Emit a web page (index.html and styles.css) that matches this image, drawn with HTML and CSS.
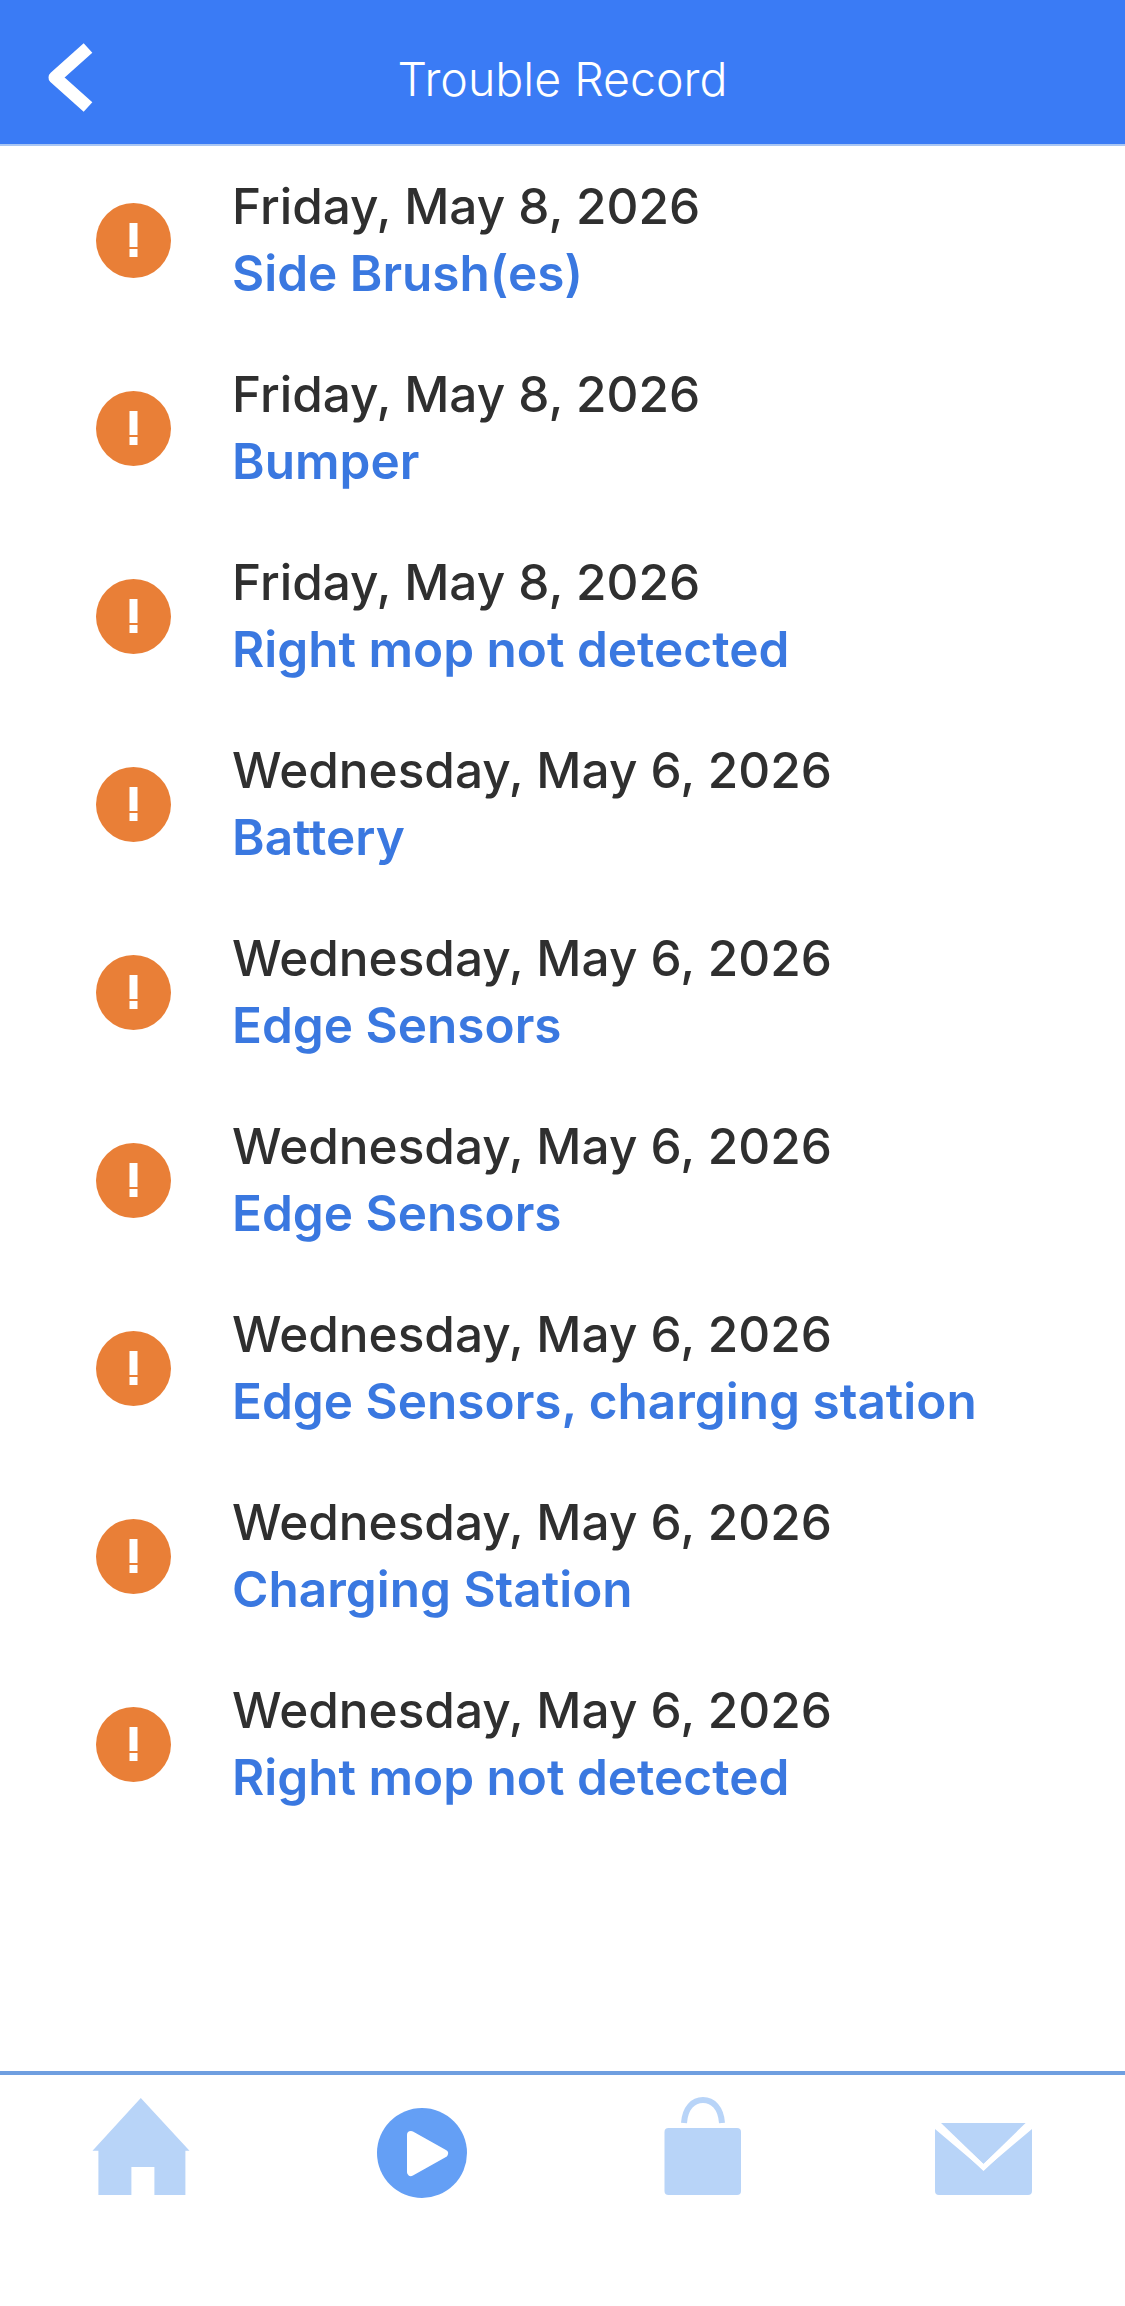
FILE: index.html
```html
<!DOCTYPE html>
<html>
<head>
  <title>Trouble Record</title>
  <link rel="stylesheet" href="styles.css">
</head>
<body>
  <div class="header">
    <svg class="back" width="70" height="90" viewBox="0 0 70 90">
      <path d="M51 15 L18 44.5 L51 74" fill="none" stroke="#fff" stroke-width="13" stroke-linejoin="round"/>
    </svg>
    <div class="title">Trouble Record</div>
  </div>

  <div class="list">
    <div class="row">
      <svg class="warn" width="75" height="75" viewBox="0 0 75 75"><circle cx="37.5" cy="37.5" r="37.5"/><rect class="mark" x="33.5" y="20" width="8" height="24"/><rect class="mark" x="33.5" y="46" width="8" height="8"/></svg>
      <div><div class="date">Friday, May 8, 2026</div><div class="name">Side Brush(es)</div></div>
    </div>
    <div class="row">
      <svg class="warn" width="75" height="75" viewBox="0 0 75 75"><circle cx="37.5" cy="37.5" r="37.5"/><rect class="mark" x="33.5" y="20" width="8" height="24"/><rect class="mark" x="33.5" y="46" width="8" height="8"/></svg>
      <div><div class="date">Friday, May 8, 2026</div><div class="name">Bumper</div></div>
    </div>
    <div class="row">
      <svg class="warn" width="75" height="75" viewBox="0 0 75 75"><circle cx="37.5" cy="37.5" r="37.5"/><rect class="mark" x="33.5" y="20" width="8" height="24"/><rect class="mark" x="33.5" y="46" width="8" height="8"/></svg>
      <div><div class="date">Friday, May 8, 2026</div><div class="name">Right mop not detected</div></div>
    </div>
    <div class="row">
      <svg class="warn" width="75" height="75" viewBox="0 0 75 75"><circle cx="37.5" cy="37.5" r="37.5"/><rect class="mark" x="33.5" y="20" width="8" height="24"/><rect class="mark" x="33.5" y="46" width="8" height="8"/></svg>
      <div><div class="date">Wednesday, May 6, 2026</div><div class="name">Battery</div></div>
    </div>
    <div class="row">
      <svg class="warn" width="75" height="75" viewBox="0 0 75 75"><circle cx="37.5" cy="37.5" r="37.5"/><rect class="mark" x="33.5" y="20" width="8" height="24"/><rect class="mark" x="33.5" y="46" width="8" height="8"/></svg>
      <div><div class="date">Wednesday, May 6, 2026</div><div class="name">Edge Sensors</div></div>
    </div>
    <div class="row">
      <svg class="warn" width="75" height="75" viewBox="0 0 75 75"><circle cx="37.5" cy="37.5" r="37.5"/><rect class="mark" x="33.5" y="20" width="8" height="24"/><rect class="mark" x="33.5" y="46" width="8" height="8"/></svg>
      <div><div class="date">Wednesday, May 6, 2026</div><div class="name">Edge Sensors</div></div>
    </div>
    <div class="row">
      <svg class="warn" width="75" height="75" viewBox="0 0 75 75"><circle cx="37.5" cy="37.5" r="37.5"/><rect class="mark" x="33.5" y="20" width="8" height="24"/><rect class="mark" x="33.5" y="46" width="8" height="8"/></svg>
      <div><div class="date">Wednesday, May 6, 2026</div><div class="name">Edge Sensors, charging station</div></div>
    </div>
    <div class="row">
      <svg class="warn" width="75" height="75" viewBox="0 0 75 75"><circle cx="37.5" cy="37.5" r="37.5"/><rect class="mark" x="33.5" y="20" width="8" height="24"/><rect class="mark" x="33.5" y="46" width="8" height="8"/></svg>
      <div><div class="date">Wednesday, May 6, 2026</div><div class="name">Charging Station</div></div>
    </div>
    <div class="row">
      <svg class="warn" width="75" height="75" viewBox="0 0 75 75"><circle cx="37.5" cy="37.5" r="37.5"/><rect class="mark" x="33.5" y="20" width="8" height="24"/><rect class="mark" x="33.5" y="46" width="8" height="8"/></svg>
      <div><div class="date">Wednesday, May 6, 2026</div><div class="name">Right mop not detected</div></div>
    </div>
  </div>

  <div class="tabs">
    <svg width="110" height="110" viewBox="0 0 110 110">
      <path fill="#b8d4f8" d="M54.8 6 L103.5 58.7 L99.4 58.7 L99.4 103 L68.4 103 L68.4 75 L45.4 75 L45.4 103 L12.4 103 L12.4 58.7 L6.5 58.7 Z"/>
    </svg>
    <svg width="110" height="110" viewBox="0 0 110 110">
      <circle cx="55" cy="61" r="45" fill="#649ff5"/>
      <path fill="#fff" stroke="#fff" stroke-width="8" stroke-linejoin="round" d="M44 43 L77 61.5 L44 80 Z"/>
    </svg>
    <svg width="110" height="110" viewBox="0 0 110 110">
      <path fill="none" stroke="#b8d4f8" stroke-width="6" d="M36 31 C37 16 45 8 55 8 C65 8 73 16 74 31"/>
      <rect x="16.5" y="36" width="76.5" height="67" rx="4" fill="#b8d4f8"/>
    </svg>
    <svg width="110" height="110" viewBox="0 0 110 110">
      <path fill="#b8d4f8" d="M12 31 L96.6 31 L54.5 72 Z"/>
      <path fill="#b8d4f8" d="M6 37 L54.5 78 L103 37 L103 99 Q103 103 99 103 L10 103 Q6 103 6 99 Z"/>
      <path fill="none" stroke="#fff" stroke-width="5" d="M6 30 L54.5 75.5 L103 30"/>
    </svg>
  </div>
</body>
</html>
```

FILE: styles.css
```css
html, body {
  margin: 0;
  height: 100%;
}
body {
  display: flex;
  flex-direction: column;
  height: 2306px;
  font-family: Inter, "Liberation Sans", sans-serif;
  background-color: #fff;
}
.header {
  position: relative;
  height: 146px;
  background-color: #3a7bf5;
  border-bottom: 2px solid #a9c6f3;
  box-sizing: border-box;
  display: flex;
  align-items: center;
  justify-content: center;
}
.back {
  position: absolute;
  left: 37px;
  top: 33px;
}
.title {
  color: #fff;
  font-size: 46.5px;
  font-weight: 300;
  padding-top: 13px;
}
.list {
  flex: 1;
}
.row {
  height: 188px;
  display: flex;
  align-items: center;
  padding-left: 96px;
}
.warn {
  margin-right: 61px;
  flex: none;
}
.warn circle {
  fill: #e97f37;
}
.warn .mark {
  fill: #fff;
}
.date {
  font-size: 49.5px;
  font-weight: 500;
  line-height: 67px;
  color: #2f2f2f;
}
.name {
  font-size: 49.5px;
  font-weight: 600;
  line-height: 67px;
  color: #3a78e0;
}
.tabs {
  height: 235px;
  box-sizing: border-box;
  border-top: 4px solid #6f9fe0;
  padding-top: 17px;
  display: grid;
  grid-template-columns: repeat(4, 1fr);
  justify-items: center;
  align-items: start;
}
```
